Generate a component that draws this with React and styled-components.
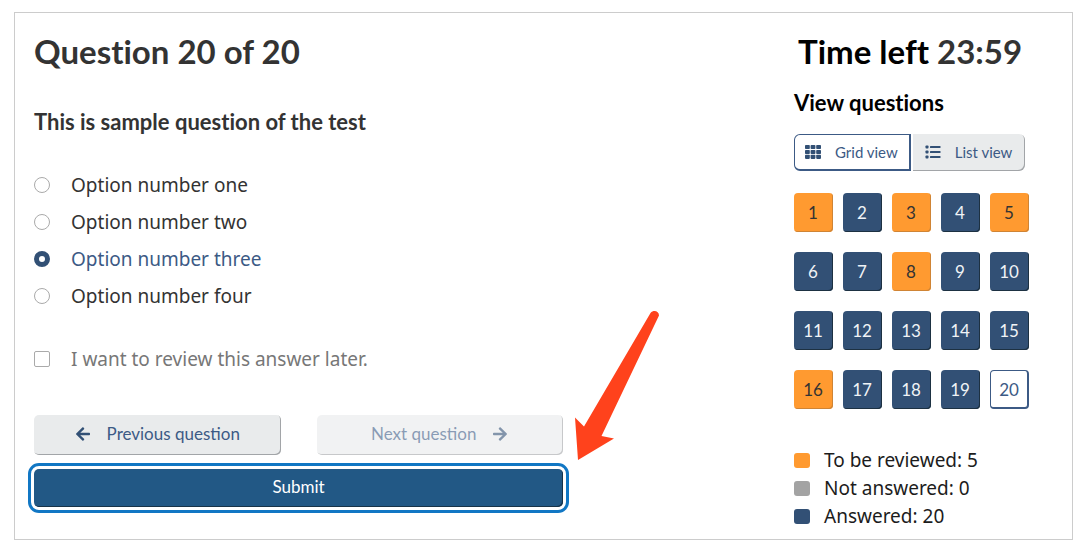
import React, { useState } from 'react';
import styled, { createGlobalStyle, css } from 'styled-components';
import { FaArrowLeft, FaArrowRight } from 'react-icons/fa';

const color = {
  text: '#333333',
  muted: '#777777',
  navy: '#325075',
  link: '#3c5a85',
  orange: '#ff9a30',
  grey: '#a3a3a3',
  button: '#e9ebec',
  border: '#cccccc',
  submit: '#225885',
  focus: '#1177c4',
};

const heading = "Lato, 'Open Sans', sans-serif";
const body = "'Noto Sans', 'Open Sans', sans-serif";

const GlobalStyle = createGlobalStyle`
  * {
    box-sizing: border-box;
  }

  body {
    margin: 0;
    background: #ffffff;
    color: ${color.text};
    font-family: ${body};
    font-size: 19px;
    font-variant-ligatures: none;
  }
`;

const Page = styled.div`
  padding: 12px 7px 6px 14px;
`;

const Frame = styled.main`
  display: flex;
  justify-content: space-between;
  gap: 24px;
  padding: 16px 43px 9px 19px;
  border: 1px solid ${color.border};
`;

const QuestionForm = styled.form`
  flex: 0 1 529px;
`;

const Sidebar = styled.aside`
  flex: 0 0 235px;
`;

const Title = styled.h1`
  margin: 0;
  font-family: ${heading};
  font-size: 33px;
  font-weight: 700;
  line-height: 44px;
`;

const Timer = styled(Title).attrs({ as: 'h2' })`
  padding-left: 4px;
  color: #000000;
  white-space: nowrap;

  time {
    color: ${color.text};
  }
`;

const SubTitle = styled.h3`
  margin: 0;
  font-family: ${heading};
  font-size: 22px;
  font-weight: 700;
  line-height: 28px;
`;

const ViewTitle = styled(SubTitle)`
  margin: 16px 0 17px;
  color: #000000;
`;

const Options = styled.fieldset`
  margin: 0;
  padding: 0;
  border: 0;
`;

const Legend = styled.legend`
  padding: 35px 0 30px;
`;

const Option = styled.label`
  display: flex;
  align-items: center;
  gap: 21px;
  height: 37px;
  color: ${props => (props.$muted ? color.muted : props.$checked ? color.link : color.text)};
`;

const Review = styled(Option)`
  margin-top: 26px;
`;

const Radio = styled.input`
  appearance: none;
  flex: none;
  width: 16px;
  height: 16px;
  margin: 0;
  border: 1px solid #aaaaaa;
  border-radius: 50%;

  &:checked {
    border: 5px solid ${color.navy};
  }
`;

const Checkbox = styled.input`
  appearance: none;
  flex: none;
  width: 16px;
  height: 16px;
  margin: 0;
  border: 1px solid #aaaaaa;
  border-radius: 2px;

  &:checked {
    background: ${color.navy};
  }
`;

const Actions = styled.div`
  position: relative;
  display: grid;
  grid-template-columns: 1fr 1fr;
  column-gap: 36px;
  margin-top: 38px;
`;

const Button = styled.button`
  display: flex;
  align-items: center;
  justify-content: center;
  gap: 16px;
  height: 40px;
  padding: 0 0 3px;
  border: 0;
  border-radius: 5px;
  background: ${color.button};
  box-shadow: inset -1px -1px 0 #a2a5a8;
  color: ${color.link};
  font-family: ${heading};
  font-size: 17px;

  svg {
    color: ${color.navy};
    font-size: 16px;
  }

  &:disabled {
    opacity: 0.6;
  }
`;

const SubmitButton = styled(Button)`
  grid-column: 1 / -1;
  height: 38px;
  margin-top: 14px;
  background: ${color.submit};
  box-shadow: inset -1px -1px 0 #183348;
  color: #ffffff;
  outline: 3px solid ${color.focus};
  outline-offset: 3px;
`;

const Pointer = styled.svg`
  position: absolute;
  left: 100%;
  bottom: 46px;
  margin-left: 10px;
  pointer-events: none;
`;

const ViewSwitch = styled.div`
  display: flex;
  gap: 2px;
`;

const ViewButton = styled.button`
  display: flex;
  align-items: center;
  gap: 14px;
  height: 37px;
  padding: 0 13px 2px 12px;
  border: 0;
  border-radius: 0 6px 6px 0;
  background: ${color.button};
  box-shadow: inset -1px -1px 0 #a2a5a8;
  color: ${color.link};
  font-family: ${heading};
  font-size: 15px;

  ${props => props.$active && css`
    padding: 0 11px 1px 10px;
    border: 1px solid ${color.link};
    border-width: 1px 2px 2px 1px;
    border-radius: 6px 0 0 6px;
    background: #ffffff;
    box-shadow: none;
  `}
`;

const Grid = styled.div`
  display: grid;
  grid-template-columns: repeat(5, 39px);
  gap: 20px 10px;
  margin-top: 22px;
`;

const Cell = styled.button`
  height: 39px;
  padding: 0 1px 1px 0;
  border: 0;
  border-radius: 4px;
  background: ${color.navy};
  box-shadow: inset -1px -1px 0 #1d3142;
  color: #f0f3f6;
  font-family: ${heading};
  font-size: 17px;

  ${props => props.$status === 'review' && css`
    background: ${color.orange};
    box-shadow: inset -1px -1px 0 #cf8435;
    color: ${color.text};
  `}

  ${props => props.$status === 'current' && css`
    padding: 1px 0 0;
    border: 1px solid ${color.link};
    border-width: 1px 2px 2px 1px;
    background: #ffffff;
    box-shadow: none;
    color: ${color.link};
  `}
`;

const Summary = styled.ul`
  margin: 37px 0 0;
  padding: 0;
  color: #1c1c1c;
  list-style: none;
`;

const SummaryItem = styled.li`
  display: flex;
  align-items: center;
  gap: 14px;
  line-height: 28px;

  &::before {
    content: '';
    width: 16px;
    height: 15px;
    border-radius: 3px;
    background: ${props => props.$swatch};
  }
`;

const options = ['one', 'two', 'three', 'four'];
const toReview = [1, 3, 5, 8, 16];
const questions = Array.from({ length: 20 }, (_, i) => i + 1);

function getStatus(number) {
  if (number === 20) return 'current';
  return toReview.includes(number) ? 'review' : 'answered';
}

function GridIcon() {
  return (
    <svg width="16" height="14" viewBox="0 0 16 14" fill={color.navy} aria-hidden="true">
      {[0, 4.9, 9.8].map(y =>
        [0, 5.6, 11.2].map(x => <rect key={`${x}-${y}`} x={x} y={y} width="4.8" height="4.1" rx="0.8" />)
      )}
    </svg>
  );
}

function ListIcon() {
  return (
    <svg width="16" height="14" viewBox="0 0 16 14" fill={color.navy} aria-hidden="true">
      {[0, 5, 10].map(y => (
        <g key={y}>
          <rect x="0.5" y={y + 0.5} width="3" height="3" rx="0.8" />
          <rect x="5" y={y + 1} width="10.5" height="1.9" rx="0.5" />
        </g>
      ))}
    </svg>
  );
}

export default function App() {
  const [answer, setAnswer] = useState('three');
  const [review, setReview] = useState(false);
  const [view, setView] = useState('grid');

  return (
    <Page>
      <GlobalStyle />
      <Frame>
        <QuestionForm onSubmit={e => e.preventDefault()}>
          <Title>Question 20 of 20</Title>
          <Options>
            <Legend>
              <SubTitle>This is sample question of the test</SubTitle>
            </Legend>
            {options.map(option => (
              <Option key={option} $checked={answer === option}>
                <Radio
                  type="radio"
                  name="answer"
                  value={option}
                  checked={answer === option}
                  onChange={() => setAnswer(option)}
                />
                <span>Option number {option}</span>
              </Option>
            ))}
          </Options>
          <Review $muted>
            <Checkbox type="checkbox" checked={review} onChange={e => setReview(e.target.checked)} />
            <span>I want to review this answer later.</span>
          </Review>
          <Actions>
            <Button type="button">
              <FaArrowLeft />
              Previous question
            </Button>
            <Button type="button" disabled>
              Next question
              <FaArrowRight />
            </Button>
            <SubmitButton type="submit">Submit</SubmitButton>
            <Pointer width="88" height="152" viewBox="0 0 88 152" aria-hidden="true">
              <path
                d="M5 151 L2 108.500 L11 117.500 L77.500 4 C80.500 0.500 86 2 86 6.500 L28.500 127 L41 129.500 Z"
                fill="#ff421c"
              />
            </Pointer>
          </Actions>
        </QuestionForm>
        <Sidebar>
          <Timer>
            Time left <time>23:59</time>
          </Timer>
          <ViewTitle>View questions</ViewTitle>
          <ViewSwitch>
            <ViewButton type="button" $active={view === 'grid'} onClick={() => setView('grid')}>
              <GridIcon />
              Grid view
            </ViewButton>
            <ViewButton type="button" $active={view === 'list'} onClick={() => setView('list')}>
              <ListIcon />
              List view
            </ViewButton>
          </ViewSwitch>
          <Grid>
            {questions.map(number => (
              <Cell key={number} type="button" $status={getStatus(number)}>
                {number}
              </Cell>
            ))}
          </Grid>
          <Summary>
            <SummaryItem $swatch={color.orange}>To be reviewed: 5</SummaryItem>
            <SummaryItem $swatch={color.grey}>Not answered: 0</SummaryItem>
            <SummaryItem $swatch={color.navy}>Answered: 20</SummaryItem>
          </Summary>
        </Sidebar>
      </Frame>
    </Page>
  );
}
